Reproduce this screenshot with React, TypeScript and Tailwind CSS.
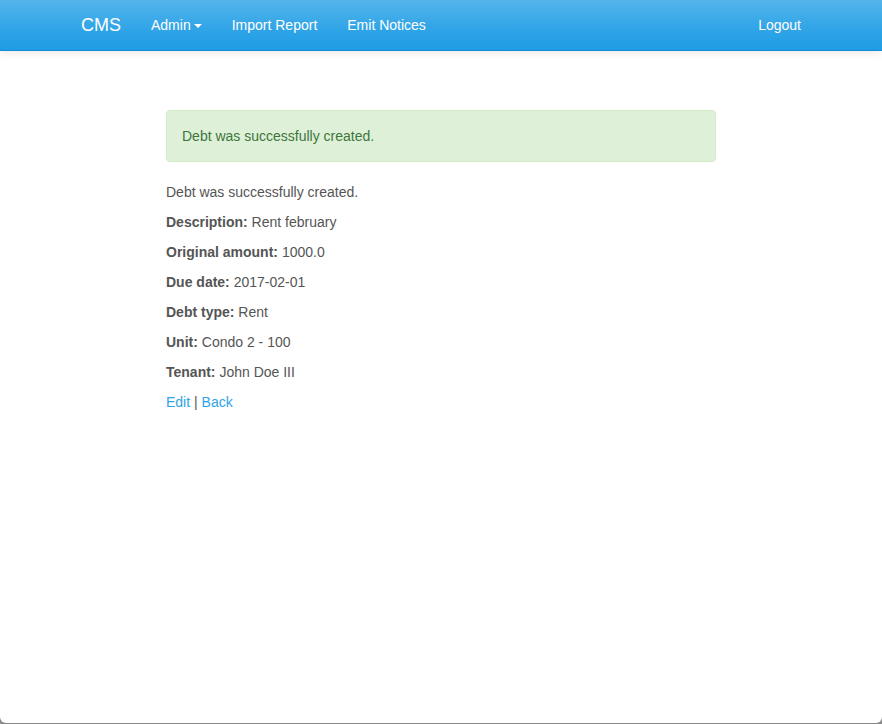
export default function App() {
  const fields = [
    { label: 'Description:', value: 'Rent february' },
    { label: 'Original amount:', value: '1000.0' },
    { label: 'Due date:', value: '2017-02-01' },
    { label: 'Debt type:', value: 'Rent' },
    { label: 'Unit:', value: 'Condo 2 - 100' },
    { label: 'Tenant:', value: 'John Doe III' },
  ];

  return (
    <div
      className="h-[724px] bg-[#8a8a8a] text-[14px] leading-[20px] text-[#555555]"
      style={{ fontFamily: '"Liberation Sans", Arial, sans-serif' }}
    >
      <div className="h-[723px] overflow-hidden rounded-b-[6px] bg-white">
        {/* Navbar */}
        <nav className="h-[51px] border-b border-[#178acc] bg-[linear-gradient(#54b4eb,#2fa4e7_60%,#1d9ce5)] shadow-[0_1px_10px_rgba(0,0,0,0.1)]">
          <div className="mx-auto flex h-[50px] w-[750px] items-center px-[15px] text-white">
            <span className="pr-[15px] text-[18px]">CMS</span>
            <span className="flex items-center px-[15px]">
              Admin
              <span className="ml-[3px] mt-[2px] h-0 w-0 border-x-[4px] border-t-[4px] border-x-transparent border-t-white" />
            </span>
            <span className="px-[15px]">Import Report</span>
            <span className="px-[15px]">Emit Notices</span>
            <span className="ml-auto">Logout</span>
          </div>
        </nav>

        {/* Content */}
        <div className="mx-auto mt-[59px] w-[550px]">
          <div className="mb-[20px] rounded-[4px] border border-[#d6e9c6] bg-[#dff0d8] p-[15px] text-[#3c763d]">
            Debt was successfully created.
          </div>
          <p className="mb-[10px]">Debt was successfully created.</p>
          {fields.map((f) => (
            <p key={f.label} className="mb-[10px]">
              <strong className="font-bold">{f.label}</strong> {f.value}
            </p>
          ))}
          <p>
            <a className="text-[#2fa4e7]">Edit</a> | <a className="text-[#2fa4e7]">Back</a>
          </p>
        </div>
      </div>
    </div>
  );
}
